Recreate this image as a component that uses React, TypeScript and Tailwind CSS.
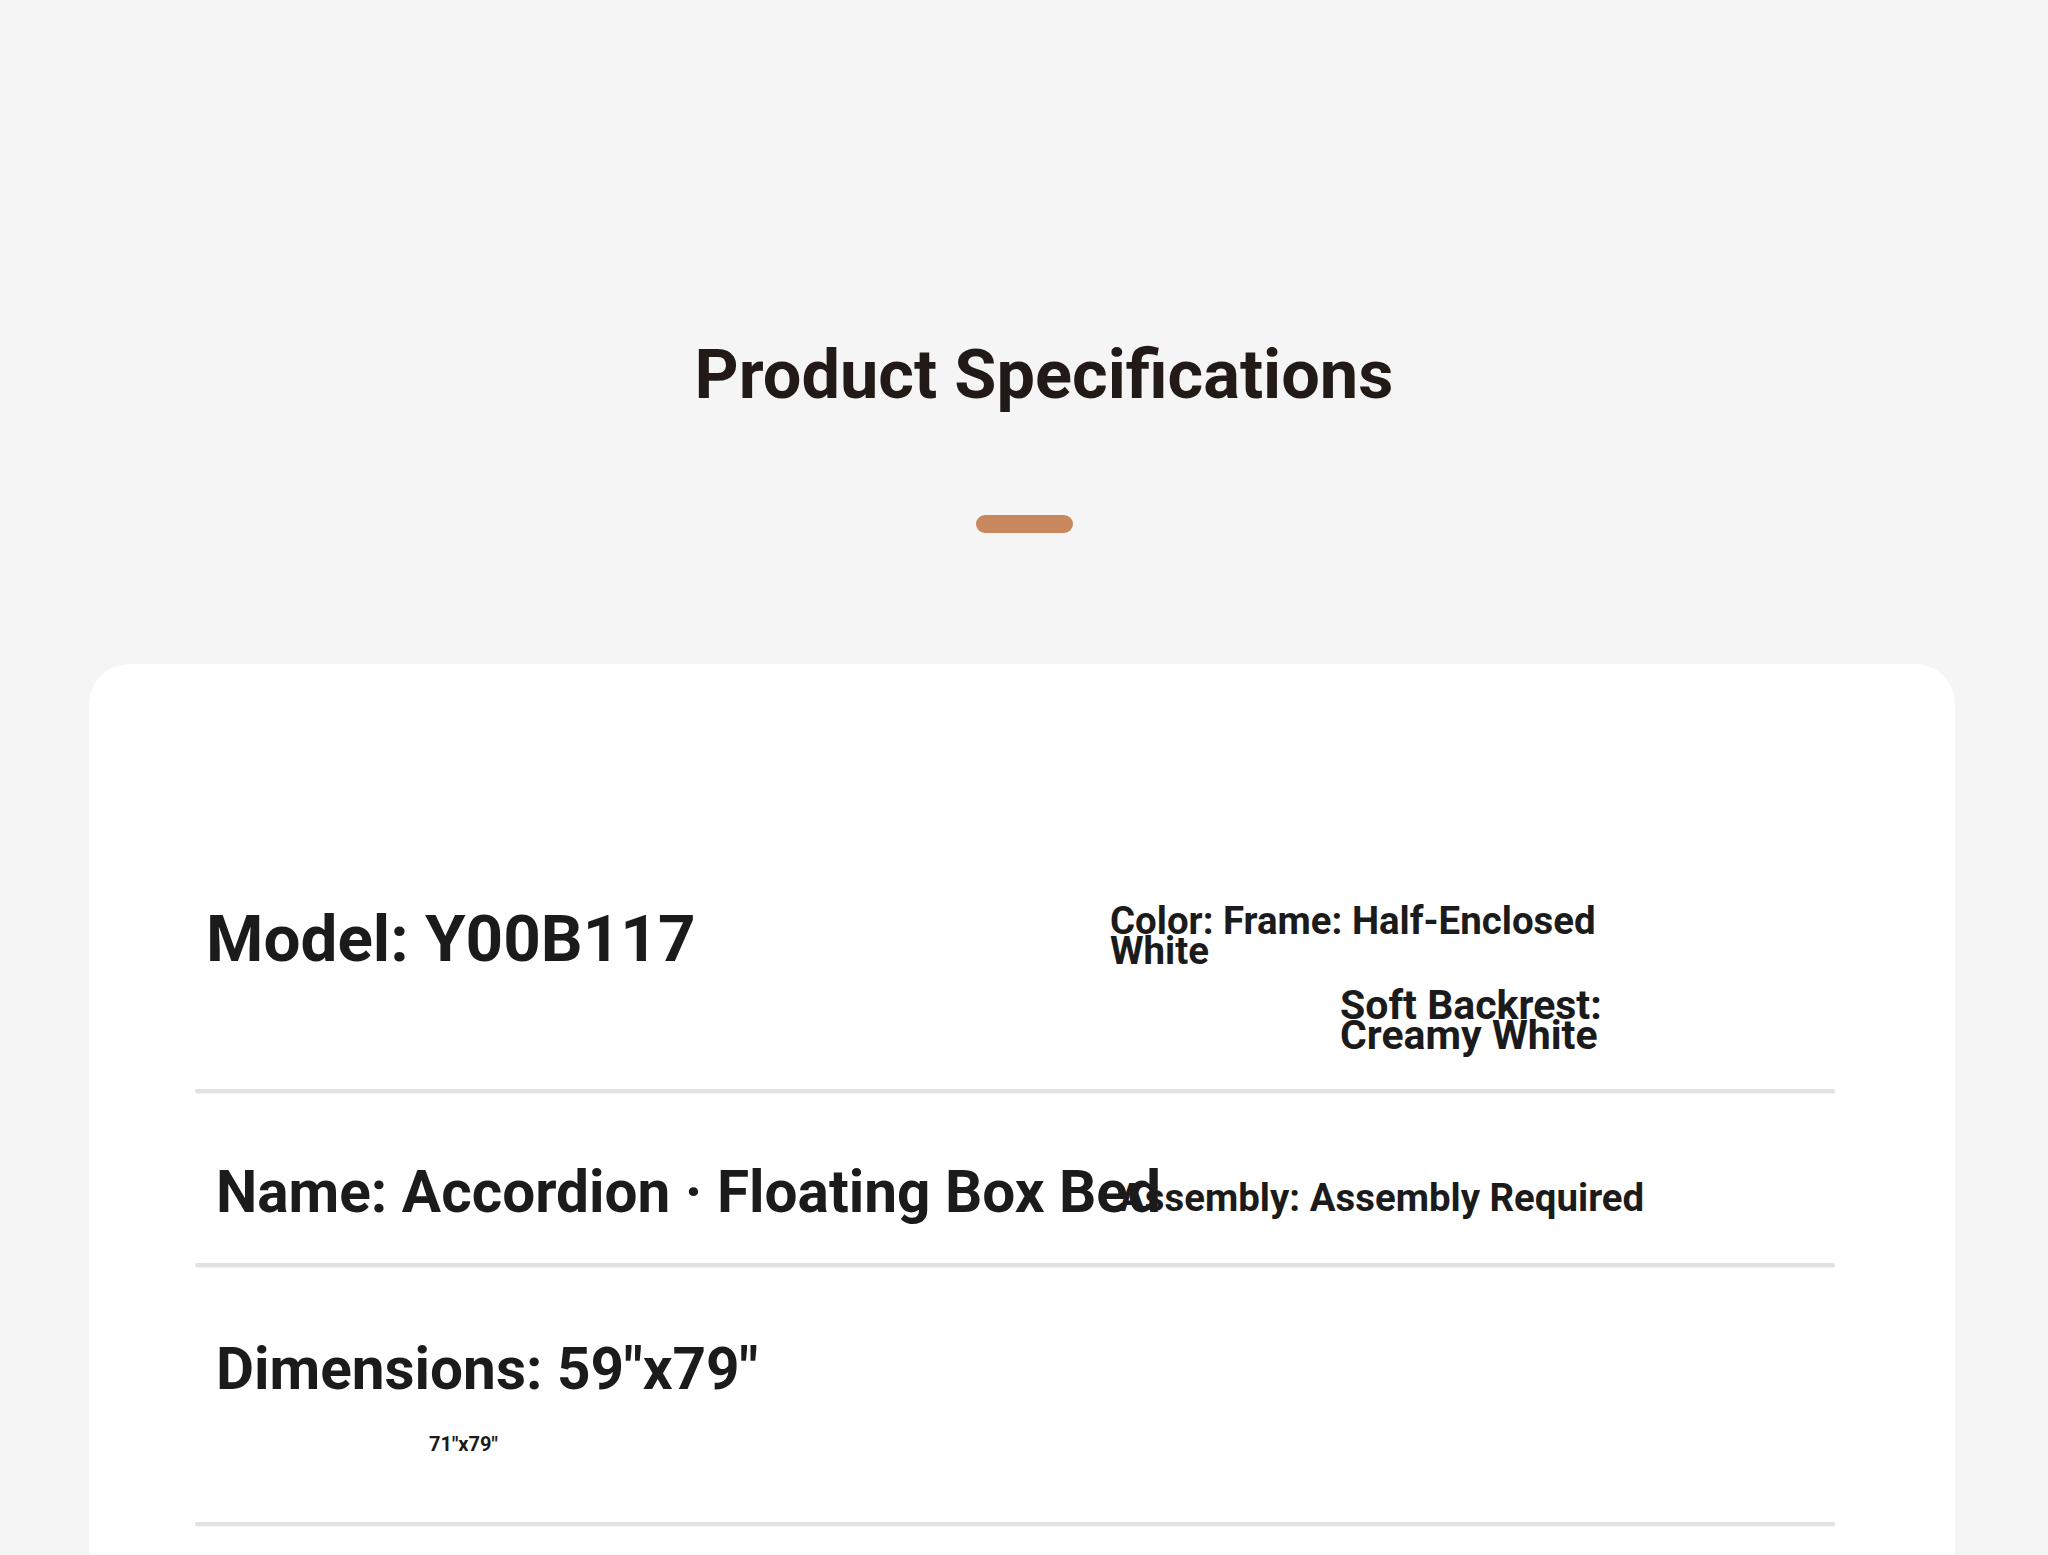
const specText = 'font-bold text-[#1b1b1b]';

function Divider() {
  return <div className="h-[4px] w-full rounded-full bg-[#e1e1e1] shadow-[0_1px_1px_rgba(0,0,0,0.05)]" />;
}

export default function App() {
  return (
    <div className="min-h-[1555px] overflow-hidden bg-[#f5f5f5] font-['Roboto',sans-serif]">
      <div className="flex flex-col items-center pt-[341px]">
        {/* heading */}
        <h2 className="pl-[40px] text-[68.5px] leading-none font-bold whitespace-nowrap text-[#221a16]">
          Product Specifications
        </h2>
        <div className="mt-[105px] h-[18px] w-[97px] rounded-full bg-[#c8875c]" />
      </div>

      <div className="mt-[131px] ml-[89px] w-[1866px] rounded-t-[40px] bg-white pt-[242px] pr-[120px] pb-[120px] pl-[106px]">
        {/* row 1 */}
        <div className="grid grid-cols-[915px_1fr] items-start pb-[39px]">
          <div className={`pl-[11px] text-[65.6px] leading-none whitespace-nowrap ${specText}`}>
            Model: Y00B117
          </div>
          <div className={`text-[38.4px] leading-[30px] ${specText}`}>
            <div>
              Color: Frame: Half-Enclosed
              <br />
              White
            </div>
            <div className="mt-[24px] ml-[230px] text-[41px] whitespace-nowrap">
              Soft Backrest:
              <br />
              Creamy White
            </div>
          </div>
        </div>
        <Divider />

        {/* row 2 */}
        <div className="grid grid-cols-[924px_1fr] items-start pt-[70px] pb-[42px]">
          <div className={`pl-[21px] text-[58.5px] leading-none whitespace-nowrap ${specText}`}>
            Name: Accordion · Floating Box Bed
          </div>
          <div className={`mt-[20px] text-[38.4px] leading-[30px] whitespace-nowrap ${specText}`}>
            Assembly: Assembly Required
          </div>
        </div>
        <Divider />

        {/* row 3 */}
        <div className="pt-[73px] pb-[68px] pl-[21px]">
          <div className={`text-[58.5px] leading-none whitespace-nowrap ${specText}`}>
            Dimensions: 59"x79"
          </div>
          <div className={`mt-[35px] ml-[213px] text-[20px] leading-none ${specText}`}>
            71"x79"
          </div>
        </div>
        <Divider />
      </div>
    </div>
  );
}
